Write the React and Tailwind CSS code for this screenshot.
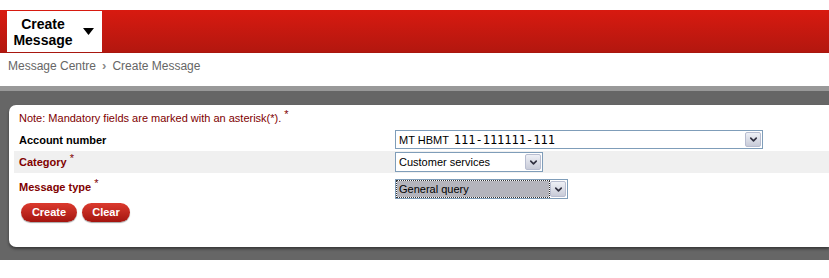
import { ChevronDown } from 'lucide-react';

function SelectBox({ value, width, height = 'h-[20px]', mono = false, focused = false }) {
  return (
    <div className={`flex items-stretch ${width} ${height} border border-[#7f9db9] bg-white p-[1px]`}>
      <div
        className={`flex-1 flex items-center px-[2px] text-[11px] text-black ${
          focused ? 'bg-[#b4b4bc] outline-1 outline-dotted outline-[#333]' : ''
        }`}
      >
        {mono ? (
          <span>
            MT HBMT <span className="font-['DejaVu_Sans_Mono',monospace] text-[12px] ml-[2px]">111-111111-111</span>
          </span>
        ) : (
          value
        )}
      </div>
      <div className="w-[16px] ml-[1px] flex items-center justify-center bg-gradient-to-b from-[#eef0f6] to-[#c8cbd8] border border-[#b8bdd0] rounded-[2px]">
        <ChevronDown className="w-[11px] h-[11px] text-[#303040]" strokeWidth={3.5} />
      </div>
    </div>
  );
}

function Star() {
  return <span className="ml-[3px] text-[11px] font-normal text-[#800000] relative -top-[4px]">*</span>;
}

function Label({ children, req, red }) {
  return (
    <div className={`w-[381px] pl-[5px] text-[11px] leading-[14px] font-bold ${red ? 'text-[#800000]' : 'text-black'}`}>
      {children}
      {req && <Star />}
    </div>
  );
}

function RedButton({ children, width }) {
  return (
    <button className={`${width} h-[19px] rounded-full bg-gradient-to-b from-[#dc3a2e] to-[#a4140f] text-white text-[11px] font-bold shadow-[0_1px_1px_rgba(0,0,0,0.35)]`}>
      {children}
    </button>
  );
}

export default function App() {
  return (
    <div className="w-[829px] h-[278px] bg-white font-['Liberation_Sans',Arial,sans-serif] overflow-hidden">
      <div className="h-[10px]" />
      {/* Red header with tab */}
      <div className="h-[43px] bg-gradient-to-b from-[#d81a10] to-[#b3170f] border-b border-[#a8170f] flex items-end pl-[7px]">
        <div className="w-[95px] h-[41px] bg-white flex items-center">
          <div className="w-[72px] text-center text-[14px] leading-[16px] font-bold text-black">
            Create<br />Message
          </div>
          <svg width="11" height="7" viewBox="0 0 11 7" className="ml-[4px]">
            <path d="M0 0 L11 0 L5.5 7 Z" fill="#000" />
          </svg>
        </div>
      </div>
      {/* Breadcrumb */}
      <div className="h-[33px] pl-[8px] pt-[5px] flex items-start text-[12px] leading-[16px] text-[#666]">
        <span>Message Centre</span>
        <span className="mx-[6px] text-[13px] font-bold leading-[15px] text-[#888]">&#x203A;</span>
        <span>Create Message</span>
      </div>
      {/* Grey area */}
      <div className="h-[5px] bg-[#999]" />
      <div className="h-[169px] bg-[#666] pt-[14px] pl-[9px]">
        <div className="h-[142px] bg-white rounded-l-[7px] shadow-[0_2px_3px_rgba(0,0,0,0.45)] pl-[5px]">
          <div className="h-[23px] pt-[6px] pl-[5px] text-[11px] leading-[14px] text-[#800000]">
            Note: Mandatory fields are marked with an asterisk(*).
            <Star />
          </div>
          <div className="h-[23px] flex items-center">
            <Label>Account number</Label>
            <SelectBox width="w-[368px]" height="h-[19px]" mono />
          </div>
          <div className="h-[22px] flex items-center bg-[#f0f0f0]">
            <Label red req>Category</Label>
            <SelectBox width="w-[148px]" value="Customer services" />
          </div>
          <div className="h-[28px] flex items-start pt-[6px]">
            <div className="pt-[1px]">
              <Label red req>Message type</Label>
            </div>
            <SelectBox width="w-[173px]" value="General query" focused />
          </div>
          <div className="flex gap-[5px] pl-[7px] pt-[2px]">
            <RedButton width="w-[56px]">Create</RedButton>
            <RedButton width="w-[48px]">Clear</RedButton>
          </div>
        </div>
      </div>
    </div>
  );
}
